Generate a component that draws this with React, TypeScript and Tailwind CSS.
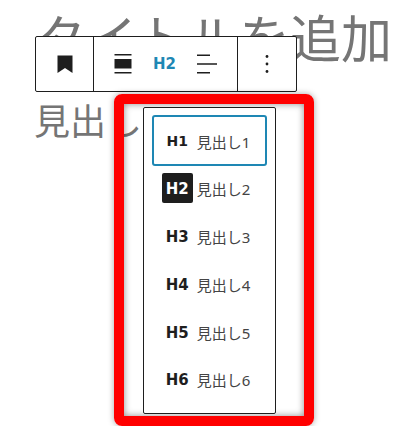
const fontStack = "font-['Noto_Sans','Noto_Sans_CJK_JP',sans-serif]"
const tagFont = "font-['DejaVu_Sans',sans-serif]"

const levels = [
  { tag: 'H1', label: '見出し1' },
  { tag: 'H2', label: '見出し2' },
  { tag: 'H3', label: '見出し3' },
  { tag: 'H4', label: '見出し4' },
  { tag: 'H5', label: '見出し5' },
  { tag: 'H6', label: '見出し6' },
]

function LevelRow({ tag, label }: { tag: string; label: string }) {
  const focused = tag === 'H1'
  const active = tag === 'H2'
  return (
    <div
      className={`flex items-center justify-center rounded-[3px] pr-[7px] ${
        focused ? 'border-2 border-[#1e87b4] h-[51px] mt-[-1px] mb-[-1.4px]' : 'h-[47.7px]'
      }`}
    >
      <span
        className={`w-[31px] h-[30px] flex items-center justify-center rounded-[2px] font-bold leading-none ${tagFont} ${
          active ? 'bg-[#1e1e1e] text-white' : 'text-[#1e1e1e]'
        } ${focused ? 'text-[14px] pt-[1px]' : 'text-[15px] pt-[3px]'}`}
      >
        {tag}
      </span>
      <span className="ml-[4px] mt-[3px] text-[15px] leading-none text-[#444]">{label}</span>
    </div>
  )
}

export default function App() {
  return (
    <div className={`relative w-[412px] h-[426px] overflow-hidden bg-white ${fontStack}`}>
      <div className="pl-[35px] pt-[8px] text-[51px] leading-[60px] text-[#757575] whitespace-nowrap">
        タイトルを追加
      </div>
      <div className="pl-[34px] pt-[32px] text-[36px] leading-[44px] text-[#757575] whitespace-nowrap">
        見出し
      </div>

      {/* block toolbar */}
      <div className="absolute left-[35px] top-[36px] w-[262px] h-[56px] flex bg-white border border-[#1e1e1e] rounded-[2px]">
        <div className="w-[58px] flex items-center justify-center border-r border-[#1e1e1e]">
          <svg width="24" height="24" viewBox="0 0 24 24" className="mt-[-1px]">
            <path d="M4.5 3.5h15v17.5l-7.5-5-7.5 5z" fill="#1e1e1e" />
          </svg>
        </div>
        <div className="w-[144px] flex items-center justify-center gap-[21px] border-r border-[#1e1e1e]">
          <svg width="18" height="20" viewBox="0 0 18 20" className="shrink-0 mt-[-1px]">
            <path d="M0.5 0h17v1.6H0.5zM0.5 5h17v9.5H0.5zM0.5 18h17v1.6H0.5z" fill="#1e1e1e" />
          </svg>
          <span className={`pt-[1px] text-[15px] font-bold leading-none text-[#1e87b4] ${tagFont}`}>H2</span>
          <svg width="20" height="20" viewBox="0 0 20 20" className="shrink-0 mt-[-1px]">
            <path d="M0 0.4h13V2H0zM0 9.2h20v1.6H0zM0 18h13v1.6H0z" fill="#1e1e1e" />
          </svg>
        </div>
        <div className="flex-1 flex items-center justify-center">
          <svg width="24" height="24" viewBox="0 0 24 24">
            <circle cx="12" cy="4.5" r="1.4" fill="#1e1e1e" />
            <circle cx="12" cy="12" r="1.4" fill="#1e1e1e" />
            <circle cx="12" cy="19.5" r="1.4" fill="#1e1e1e" />
          </svg>
        </div>
      </div>

      {/* highlight frame */}
      <div className="absolute left-[114px] top-[94px] w-[200px] h-[332px] rounded-[8px] border-[10px] border-[#ff0000] shadow-[0_0_6px_rgba(0,0,0,0.35),inset_0_0_7px_rgba(0,0,0,0.45)]" />

      {/* heading level dropdown */}
      <div className="absolute left-[143px] top-[107px] w-[133px] h-[307px] bg-white border border-[#1e1e1e] rounded-[2px] px-[8px] pt-[8px]">
        {levels.map((level) => (
          <LevelRow key={level.tag} tag={level.tag} label={level.label} />
        ))}
      </div>
    </div>
  )
}
